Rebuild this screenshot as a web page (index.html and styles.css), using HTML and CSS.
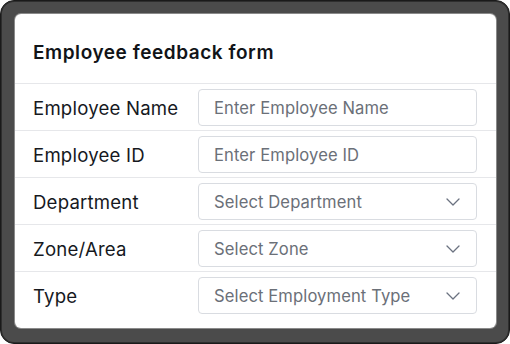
FILE: index.html
```html
<!DOCTYPE html>
<html>
<head>
<meta charset="utf-8">
<link rel="stylesheet" href="styles.css">
</head>
<body>
<div class="frame">
  <div class="card">
    <div class="header">Employee feedback form</div>
    <div class="row">
      <div class="label">Employee Name</div>
      <div class="field">Enter Employee Name</div>
    </div>
    <div class="row">
      <div class="label">Employee ID</div>
      <div class="field">Enter Employee ID</div>
    </div>
    <div class="row">
      <div class="label">Department</div>
      <div class="field select"><span>Select Department</span>
        <svg class="chev" width="14" height="8" viewBox="0 0 14 8"><path d="M1 1 L7 7 L13 1" fill="none" stroke="#6b7280" stroke-width="1.3" stroke-linecap="round" stroke-linejoin="round"/></svg></div>
    </div>
    <div class="row">
      <div class="label">Zone/Area</div>
      <div class="field select"><span>Select Zone</span>
        <svg class="chev" width="14" height="8" viewBox="0 0 14 8"><path d="M1 1 L7 7 L13 1" fill="none" stroke="#6b7280" stroke-width="1.3" stroke-linecap="round" stroke-linejoin="round"/></svg></div>
    </div>
    <div class="row last">
      <div class="label">Type</div>
      <div class="field select"><span>Select Employment Type</span>
        <svg class="chev" width="14" height="8" viewBox="0 0 14 8"><path d="M1 1 L7 7 L13 1" fill="none" stroke="#6b7280" stroke-width="1.3" stroke-linecap="round" stroke-linejoin="round"/></svg></div>
    </div>
  </div>
</div>
</body>
</html>
```
FILE: styles.css
```css
* { box-sizing: border-box; }
html, body { margin: 0; padding: 0; background: #ffffff; }
body { width: 510px; height: 344px; overflow: hidden; font-family: Inter, "Noto Sans", sans-serif; }
.frame {
  width: 510px; height: 344px;
  background: #4b4b4b;
  border-radius: 14px;
  border: 1px solid #1a1a1a;
  box-shadow: inset 0 0 0 1px #2e2e2e;
  padding: 13px 13px 15px 14px;
}
.card {
  background: #ffffff;
  border-radius: 6px;
  height: 314px;
  width: 481px;
  box-shadow: 0 0 0 1px #8a8a8a;
  overflow: hidden;
}
.header {
  height: 69px;
  padding: 28px 0 0 18px;
  font-size: 19px;
  font-weight: 600;
  color: #111418;
  letter-spacing: 0.55px;
  line-height: 22px;
}
.row {
  display: grid;
  grid-template-columns: 165px 279px;
  align-items: center;
  border-top: 1px solid #e6e7ea;
  padding: 5px 0 4px 18px;
  height: 47px;
}
.row.last { height: 56px; padding-bottom: 13px; }
.label {
  font-size: 18.6px;
  color: #16191e;
  line-height: 22px;
  letter-spacing: 0.2px;
}
.field {
  height: 37px;
  border: 1px solid #d9dce1;
  border-radius: 4px;
  padding: 0 15px;
  display: flex;
  align-items: center;
  justify-content: space-between;
  font-size: 16.6px;
  letter-spacing: 0.1px;
  color: #6b7078;
}
.chev { margin-right: 1px; }
```
